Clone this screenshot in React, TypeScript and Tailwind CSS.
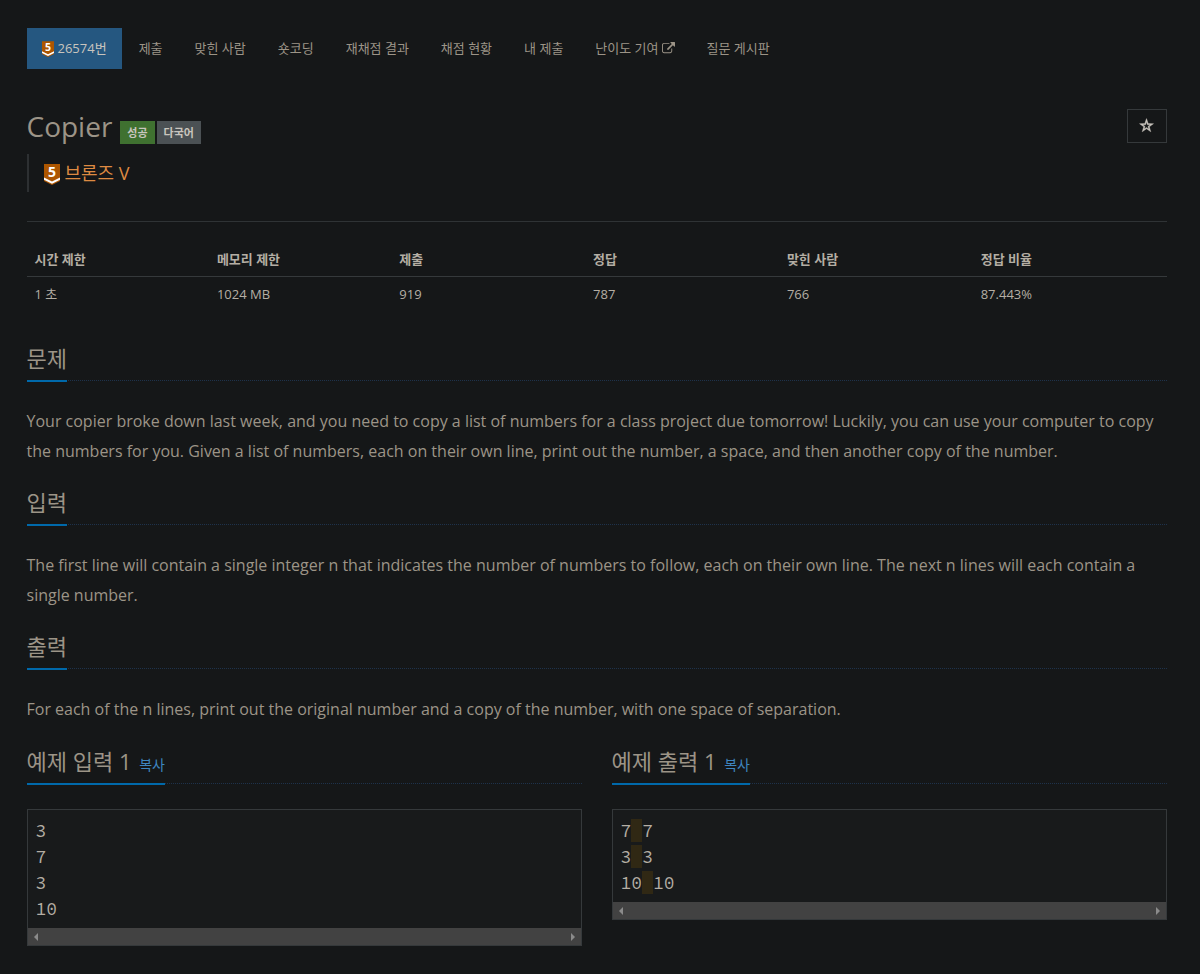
import type { ReactNode } from "react";

const tabs = [
  "제출",
  "맞힌 사람",
  "숏코딩",
  "재채점 결과",
  "채점 현황",
  "내 제출",
  "난이도 기여",
  "질문 게시판",
];

const stats = [
  { label: "시간 제한", value: "1 초", width: "w-[16%]" },
  { label: "메모리 제한", value: "1024 MB", width: "w-[16%]" },
  { label: "제출", value: "919", width: "w-[17%]" },
  { label: "정답", value: "787", width: "w-[17%]" },
  { label: "맞힌 사람", value: "766", width: "w-[17%]" },
  { label: "정답 비율", value: "87.443%", width: "w-[17%]" },
];

const sections = [
  {
    title: "문제",
    body: "Your copier broke down last week, and you need to copy a list of numbers for a class project due tomorrow! Luckily, you can use your computer to copy the numbers for you. Given a list of numbers, each on their own line, print out the number, a space, and then another copy of the number.",
  },
  {
    title: "입력",
    body: "The first line will contain a single integer n that indicates the number of numbers to follow, each on their own line. The next n lines will each contain a single number.",
  },
  {
    title: "출력",
    body: "For each of the n lines, print out the original number and a copy of the number, with one space of separation.",
  },
];

function TierBadge({ className }: { className: string }) {
  return (
    <svg
      viewBox="0 0 16 21"
      className={`overflow-visible ${className}`}
      aria-hidden="true"
    >
      <path d="M0 0h16v17l-8 4-8-4z" fill="#ad5600" />
      <path d="M0 13.5l8 4 8-4v2.2l-8 4-8-4z" fill="#fff" />
      <text
        x="8"
        y="13"
        textAnchor="middle"
        fill="#fff"
        fontSize="14"
        fontWeight="700"
      >
        5
      </text>
    </svg>
  );
}

function ExternalIcon() {
  return (
    <svg
      viewBox="0 0 1792 1792"
      className="ml-[3px] size-[13px] fill-current"
      aria-hidden="true"
    >
      <path d="M1408 928v320q0 119-84.5 203.5t-203.5 84.5h-832q-119 0-203.5-84.5t-84.5-203.5v-832q0-119 84.5-203.5t203.5-84.5h704q14 0 23 9t9 23v64q0 14-9 23t-23 9h-704q-66 0-113 47t-47 113v832q0 66 47 113t113 47h832q66 0 113-47t47-113v-320q0-14 9-23t23-9h64q14 0 23 9t9 23zm384-864v512q0 26-19 45t-45 19-45-19l-176-176-652 652q-10 10-23 10t-23-10l-114-114q-10-10-10-23t10-23l652-652-176-176q-19-19-19-45t19-45 45-19h512q26 0 45 19t19 45z" />
    </svg>
  );
}

function StarIcon() {
  return (
    <svg
      viewBox="0 0 16 16"
      className="size-4 fill-current stroke-current"
      strokeWidth=".4"
      aria-hidden="true"
    >
      <path
        fillRule="evenodd"
        d="M7.5 .6L9.2 5.6L14.5 5.7L10.3 8.8L11.8 13.8L7.5 10.8L3.2 13.8L4.7 8.8L.5 5.7L5.8 5.6ZM7.5 4.1L8.4 6.7L11.1 6.8L9 8.4L9.7 11L7.5 9.5L5.3 11L6 8.4L3.9 6.8L6.6 6.7Z"
      />
    </svg>
  );
}

function Headline({ children }: { children: ReactNode }) {
  return (
    <div className="flex border-b border-dotted border-[#1e324b]">
      <h2 className="-mb-[2px] border-b-2 border-[#0069aa] pb-[5px] text-[22px] leading-[34px] text-[#9c9487]">
        {children}
      </h2>
    </div>
  );
}

function Sample({ title, children }: { title: string; children: ReactNode }) {
  return (
    <section>
      <Headline>
        {title}{" "}
        <button type="button" className="ml-[2px] text-sm text-[#3e85bf]">
          복사
        </button>
      </Headline>
      <div className="mt-[25px] border border-[#35393b] bg-[#181a1b]">
        <pre className="px-2 pt-2 pb-[6px] font-['Source_Code_Pro','Liberation_Mono','Noto_Sans_CJK_KR',monospace] text-lg leading-[26px] text-[#b4aea4]">
          {children}
        </pre>
        <div className="flex h-[17px] items-center justify-between bg-[#424242] px-[6px]">
          <svg viewBox="0 0 4 8" className="h-2 w-1 fill-[#8b8b8b]">
            <path d="M4 0v8L0 4z" />
          </svg>
          <svg viewBox="0 0 4 8" className="h-2 w-1 fill-[#8b8b8b]">
            <path d="M0 0v8l4-4z" />
          </svg>
        </div>
      </div>
    </section>
  );
}

function Space() {
  return <span className="bg-[#302814]"> </span>;
}

export default function App() {
  return (
    <div className="min-h-screen bg-[#151718] py-7 pr-[7px] font-['Open_Sans','Noto_Sans_CJK_KR',sans-serif] text-[13px] text-[#b4aea4]">
      <div className="mx-auto max-w-[1140px]">
        <nav className="flex flex-wrap gap-[2px] leading-[21px] text-[#9c9487]">
          <a
            href="#problem"
            className="flex items-center bg-[#255780] px-[15px] py-[10px] text-[#c9c5be]"
          >
            <TierBadge className="mr-1 h-4 w-3" />
            26574번
          </a>
          {tabs.map((tab) => (
            <a
              key={tab}
              href="#tab"
              className="flex items-center px-[15px] py-[10px]"
            >
              {tab}
              {tab === "난이도 기여" && <ExternalIcon />}
            </a>
          ))}
        </nav>

        <header className="mt-10 flex items-start justify-between">
          <div>
            <div className="flex items-end gap-[2px]">
              <h1 className="mr-[6px] text-[28px] leading-[35px] text-[#9c9487]">
                Copier
              </h1>
              <span className="bg-[#3f7130] px-[7px] py-1 text-[11px] leading-[15px] font-bold text-[#c9c5be]">
                성공
              </span>
              <span className="bg-[#4b5154] px-[7px] py-1 text-[11px] leading-[15px] font-bold text-[#c9c5be]">
                다국어
              </span>
            </div>
            <blockquote className="mt-[10px] flex h-[38px] items-center border-l-2 border-[#2d3032] pl-[15px] text-lg text-[#dd8a42]">
              <TierBadge className="mt-[2px] mr-[5px] h-[21px] w-4" />
              브론즈 V
            </blockquote>
          </div>
          <button
            type="button"
            aria-label="즐겨찾기"
            className="flex h-[34px] w-10 items-center justify-center border border-[#35393b] text-[#c9c5be]"
          >
            <StarIcon />
          </button>
        </header>

        <hr className="mt-[29px] border-[#2f3335]" />

        <table className="mt-5 w-full table-fixed text-left leading-[18px]">
          <thead>
            <tr className="border-b border-[#35393b]">
              {stats.map((stat) => (
                <th key={stat.label} className={`${stat.width} p-2 font-bold`}>
                  {stat.label}
                </th>
              ))}
            </tr>
          </thead>
          <tbody>
            <tr>
              {stats.map((stat) => (
                <td key={stat.label} className="p-2">
                  {stat.value}
                </td>
              ))}
            </tr>
          </tbody>
        </table>

        <main className="mt-[30px]">
          {sections.map((section) => (
            <section key={section.title} className="mb-[19px]">
              <Headline>{section.title}</Headline>
              <p className="pt-[25px] text-base leading-[30px] text-[#9c9487]">
                {section.body}
              </p>
            </section>
          ))}

          <div className="mt-5 grid grid-cols-2 items-start gap-[30px]">
            <Sample title="예제 입력 1">{"3\n7\n3\n10"}</Sample>
            <Sample title="예제 출력 1">
              7<Space />7{"\n"}
              3<Space />3{"\n"}
              10<Space />10
            </Sample>
          </div>
        </main>
      </div>
    </div>
  );
}
